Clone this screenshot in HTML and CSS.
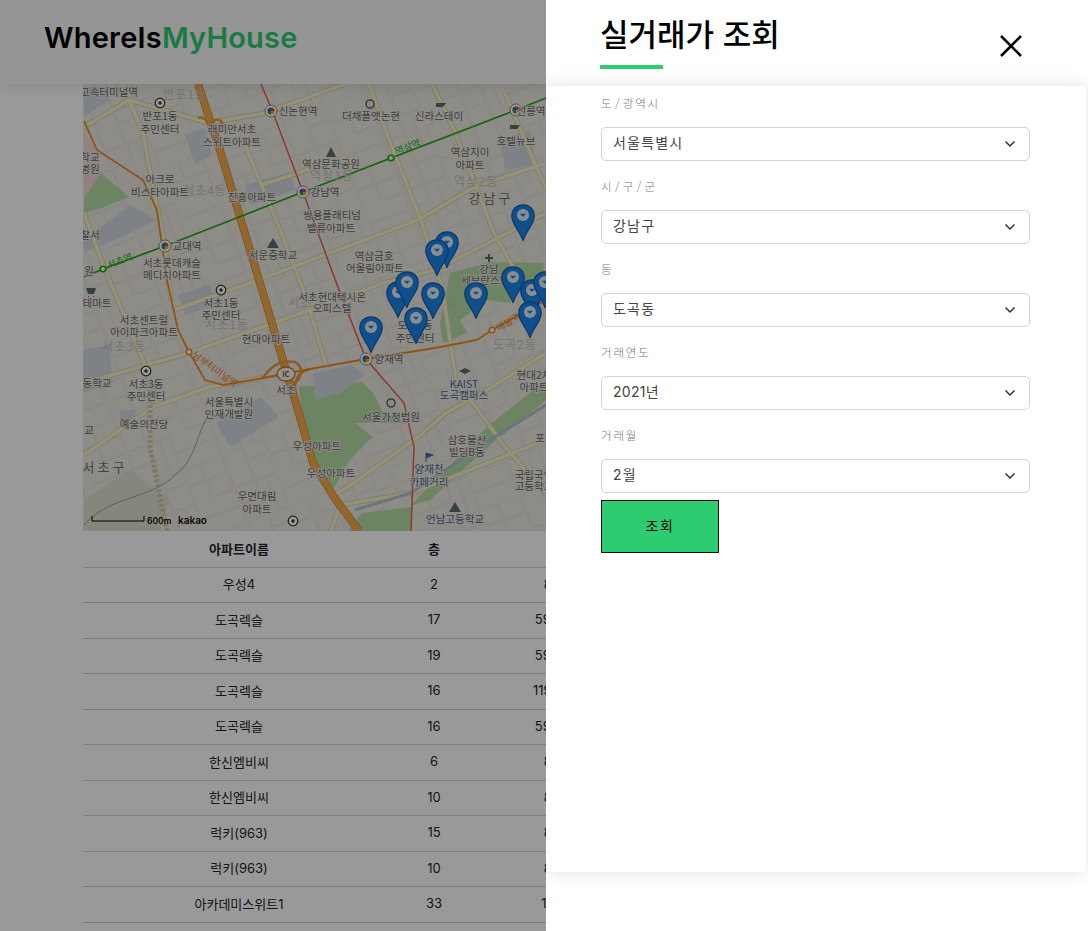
FILE: index.html
```html
<!DOCTYPE html>
<html lang="ko">
<head>
    <meta charset="UTF-8">
    <meta name="viewport" content="width=device-width, initial-scale=1.0">
    <title>WhereIsMyHouse</title>
    <link rel="stylesheet" href="styles.css">
</head>
<body>
    <header class="site-header">
        <div class="logo">WhereIs<span class="logo-green">MyHouse</span></div>
    </header>

    <main class="content">
        <div class="map">
            <svg class="map-svg" width="922" height="447" viewBox="83 84 922 447">
                <defs>
                    <pattern id="blocksA" width="88" height="72" patternUnits="userSpaceOnUse" patternTransform="rotate(-21)">
                        <path d="M0 0H88M0 0V72M20 0V36M44 0V72M66 0V72M0 18H44M44 36H88M0 54H66M22 36H44M78 36V72M66 14H88" class="street-casing"/>
                        <path d="M0 0H88M0 0V72M20 0V36M44 0V72M66 0V72M0 18H44M44 36H88M0 54H66M22 36H44M78 36V72M66 14H88" class="street"/>
                    </pattern>
                    <g id="majorRoads">
                        <path d="M84 127L129 100L209 123M129 100L143 133L153 187L164 240L171 300"/>
                        <path d="M209 123L265 113L345 84"/>
                        <path d="M84 213L104 267L143 360L157 403"/>
                        <path d="M244 143L279 227L306 297L326 365"/>
                        <path d="M84 455L153 407L209 387L261 378"/>
                        <path d="M84 383L188 353L310 310L383 283L435 270L494 240L546 213"/>
                        <path d="M174 310L258 280L418 220L474 187L546 163"/>
                        <path d="M369 84L393 150L421 220L442 287L456 380L505 447L546 493"/>
                        <path d="M432 84L453 127L494 233L522 283"/>
                        <path d="M505 93L536 167L546 187"/>
                        <path d="M261 185L292 175L345 157"/>
                        <path d="M331 497L348 487L418 437L446 413L487 390L546 353"/>
                        <path d="M331 531L340 505L411 493L546 440"/>
                    </g>
                    <symbol id="marker" viewBox="0 0 24 37">
                        <path d="M12 .8C5.5.8.8 5.6.8 12C.8 20 8 26 12 36.5C16 26 23.2 20 23.2 12C23.2 5.6 18.5.8 12 .8Z" class="marker-body"/>
                        <circle cx="12" cy="11" r="6" class="marker-dot"/>
                        <path d="M8.8 9.8H15.2L12 13Z" class="marker-arrow"/>
                    </symbol>
                    <symbol id="station" viewBox="0 0 14 14">
                        <circle cx="7" cy="7" r="6" class="station-ring"/>
                        <path d="M7 3.4A3.6 3.6 0 0 1 10.6 7H7Z" fill="#d6402f"/>
                        <path d="M10.6 7A3.6 3.6 0 0 1 7 10.6V7Z" fill="#e8b020"/>
                        <path d="M7 10.6A3.6 3.6 0 0 1 3.4 7H7Z" fill="#2f9a3c"/>
                        <path d="M3.4 7A3.6 3.6 0 0 1 7 3.4V7Z" fill="#2f5fd0"/>
                    </symbol>
                    <symbol id="dotmark" viewBox="0 0 12 12">
                        <circle cx="6" cy="6" r="4.8" class="dot-ring"/>
                        <circle cx="6" cy="6" r="1.7" class="dot-core"/>
                    </symbol>
                </defs>

                <rect x="83" y="84" width="922" height="447" class="land"/>
                <rect x="83" y="84" width="922" height="447" fill="url(#blocksA)"/>

                <path d="M84 133L97 150L101 173L84 200Z" class="pink"/>
                <path d="M84 213V198L101 173L129 197L104 207Z" class="park"/>
                <path d="M299 387L362 382L373 393L383 413L404 423L355 423L373 437L362 447L348 463L331 493L313 457L303 423Z" class="park"/>
                <path d="M450 273L490 262L543 263L546 290L517 283L510 303L487 300L460 320L467 333L443 343L440 323Z" class="park"/>
                <path d="M348 531L362 513L411 507V531Z" class="park"/>
                <path d="M411 505L446 470L487 427L546 380V400L490 445L430 500Z" class="park"/>
                <path d="M84 532L84 500L130 470L170 500L160 531Z" class="hill"/>
                <path d="M84 87H104L110 100L84 117Z" class="block"/>
                <path d="M84 240L130 205L157 220L115 240L84 252Z" class="block"/>
                <path d="M216 423L261 397L279 417L230 447Z" class="block"/>
                <path d="M313 373L352 365L365 375L340 393L315 400Z" class="block"/>
                <path d="M178 295L210 284L216 305L185 315Z" class="block"/>
                <path d="M185 135L205 128L212 155L195 165Z" class="block"/>
                <path d="M245 185L290 172L295 190L250 205Z" class="block"/>
                <path d="M83 350L110 345L112 385L83 392Z" class="block"/>
                <path d="M120 410H135V430H120Z" class="block"/>
                <path d="M500 140L530 130L536 165L505 170Z" class="block"/>

                <use href="#majorRoads" class="road-casing"/>
                <use href="#majorRoads" class="road-fill"/>
                <path d="M355 510L411 493L490 440L546 405" class="stream"/>
                <path d="M150 380V447L167 531" class="rail"/>
                <path d="M207 417C195 440 195 460 175 475C150 500 110 495 84 525" class="contour"/>

                <path d="M198 84L219 147L240 217L259 280L279 347L296 403L313 463L334 497L359 531" class="express-casing"/>
                <path d="M198 84L219 147L240 217L259 280L279 347L296 403L313 463L334 497L359 531" class="express"/>
                <path d="M198 118C205 116 208 122 209 128C211 122 217 116 222 122C224 128 216 134 214 138" class="ramp"/>
                <path d="M263 378C272 365 280 360 295 362C305 368 302 378 292 386M310 369C296 372 293 384 296 395" class="ramp"/>

                <path d="M261 84L272 110L303 192L339 290L366 359L404 403L414 447L411 531" class="line-red"/>
                <path d="M84 277L103 269L165 246L303 192L391 158L516 110L546 98" class="line-green"/>
                <path d="M84 121L97 150L143 180L157 210L167 280L178 330L189 352L205 380L223 385L263 378L310 369L366 359L435 348L477 340L492 330L546 300" class="line-orange"/>

                <circle cx="103" cy="269" r="2.8" class="stop-green"/>
                <circle cx="391" cy="158" r="2.8" class="stop-green"/>
                <circle cx="189" cy="352" r="2.8" class="stop-orange"/>
                <circle cx="492" cy="330" r="2.8" class="stop-orange"/>
                <use href="#station" x="264" y="104" width="14" height="14"/>
                <use href="#station" x="509" y="103" width="14" height="14"/>
                <use href="#station" x="296" y="185" width="14" height="14"/>
                <use href="#station" x="158" y="239" width="14" height="14"/>
                <use href="#station" x="359" y="352" width="14" height="14"/>
                <use href="#dotmark" x="154" y="97" width="12" height="12"/>
                <use href="#dotmark" x="215" y="284" width="12" height="12"/>
                <use href="#dotmark" x="140" y="365" width="12" height="12"/>
                <use href="#dotmark" x="287" y="515" width="12" height="12"/>

                <ellipse cx="286" cy="374" rx="9" ry="7" class="ic-badge"/>
                <text x="286" y="377" class="ic-text">IC</text>

                <path d="M331 147L326 157H336Z" class="poi"/>
                <path d="M273 238L267 248H279Z" class="poi"/>
                <path d="M488 254H490V257H493V259H490V262H488V259H485V257H488Z" class="poi"/>
                <path d="M455 502L449 512H461Z" class="poi"/>
                <path d="M459 371L465 368L471 371L465 374Z" class="poi"/>
                <circle cx="391" cy="403" r="4" class="poi-ring"/>
                <circle cx="370" cy="104" r="4" class="poi-ring"/>
                <path d="M436 103H446L443 107H436ZM510 125H520L517 129H510Z" class="poi"/>
                <path d="M86 288H96L94 294H88ZM88 296H89V297H88ZM93 296H94V297H93Z" class="poi"/>
                <path d="M426 453V462M426 453L433 455L426 458" class="flag"/>

                <g class="area-labels">
                    <text x="185" y="99">반포1동</text>
                    <text x="332" y="180">역삼1동</text>
                    <text x="476" y="186">역삼2동</text>
                    <text x="205" y="195">서초4동</text>
                    <text x="227" y="329">서초1동</text>
                    <text x="124" y="351">서초3동</text>
                    <text x="515" y="349">도곡2동</text>
                    <text x="300" y="307">서초</text>
                    <text x="453" y="307">동</text>
                </g>
                <g class="district-labels">
                    <text x="491" y="203">강남구</text>
                    <text x="105" y="472">서초구</text>
                </g>
                <g class="labels">
                    <text x="109" y="96">고속터미널역</text>
                    <text x="160" y="120">반포1동</text>
                    <text x="160" y="133">주민센터</text>
                    <text x="232" y="133">래미안서초</text>
                    <text x="232" y="146">스위트아파트</text>
                    <text x="298" y="115">신논현역</text>
                    <text x="371" y="120">더채플앳논현</text>
                    <text x="439" y="120">신라스테이</text>
                    <text x="531" y="115">선릉역</text>
                    <text x="516" y="145">호텔뉴브</text>
                    <text x="470" y="156">역삼지이</text>
                    <text x="470" y="169">아파트</text>
                    <text x="331" y="168">역삼문화공원</text>
                    <text x="160" y="183">아크로</text>
                    <text x="160" y="196">비스타아파트</text>
                    <text x="252" y="201">진흥아파트</text>
                    <text x="325" y="196">강남역</text>
                    <text x="332" y="219">쌍용플래티넘</text>
                    <text x="331" y="232">밸류아파트</text>
                    <text x="90" y="161">학교</text>
                    <text x="90" y="173">병원</text>
                    <text x="90" y="239">찰서</text>
                    <text x="187" y="250">교대역</text>
                    <text x="273" y="259">서운중학교</text>
                    <text x="374" y="260">역삼금호</text>
                    <text x="375" y="272">어울림아파트</text>
                    <text x="172" y="267">서초롯데캐슬</text>
                    <text x="172" y="279">메디치아파트</text>
                    <text x="89" y="275">원</text>
                    <text x="489" y="273">강남</text>
                    <text x="490" y="284">세브란스병원</text>
                    <text x="97" y="307">테마트</text>
                    <text x="221" y="307">서초1동</text>
                    <text x="221" y="319">주민센터</text>
                    <text x="332" y="301">서초현대텍시온</text>
                    <text x="332" y="312">오피스텔</text>
                    <text x="144" y="324">서초센트럴</text>
                    <text x="144" y="336">아이파크아파트</text>
                    <text x="266" y="343">현대아파트</text>
                    <text x="415" y="329">도곡1동</text>
                    <text x="415" y="342">주민센터</text>
                    <text x="389" y="363">양재역</text>
                    <text x="286" y="394">서초</text>
                    <text x="97" y="387">동학교</text>
                    <text x="146" y="388">서초3동</text>
                    <text x="146" y="400">주민센터</text>
                    <text x="229" y="406">서울특별시</text>
                    <text x="229" y="418">인재개발원</text>
                    <text x="534" y="379">현대2차</text>
                    <text x="534" y="391">아파트</text>
                    <text x="391" y="421">서울가정법원</text>
                    <text x="144" y="428">예술의전당</text>
                    <text x="89" y="434">교</text>
                    <text x="317" y="450">우성아파트</text>
                    <text x="331" y="477">우성아파트</text>
                    <text x="467" y="444">삼호물산</text>
                    <text x="467" y="456">빌딩B동</text>
                    <text x="540" y="442">포</text>
                    <text x="534" y="479">국립국악</text>
                    <text x="534" y="490">고등학교</text>
                    <text x="257" y="500">우면대림</text>
                    <text x="257" y="513">아파트</text>
                </g>
                <g class="labels labels-blue">
                    <text x="464" y="388">KAIST</text>
                    <text x="464" y="399">도곡캠퍼스</text>
                    <text x="429" y="473">양재천</text>
                    <text x="429" y="486">카페거리</text>
                    <text x="455" y="523">언남고등학교</text>
                </g>
                <text transform="translate(409 150) rotate(-21)" class="label-green">역삼역</text>
                <text transform="translate(121 264) rotate(-21)" class="label-green">서초역</text>
                <text transform="translate(213 372) rotate(36)" class="label-orange">남부터미널역</text>
                <text transform="translate(510 325) rotate(-30)" class="label-orange">매봉역</text>

                <path d="M92 516V521H144V516" class="scale"/>
                <text x="147" y="524" class="scale-text">600m</text>
                <text x="178" y="524" class="kakao">kakao</text>

                <use href="#marker" x="511" y="204" width="24" height="37"/>
                <use href="#marker" x="435" y="231" width="24" height="37"/>
                <use href="#marker" x="425" y="239" width="24" height="37"/>
                <use href="#marker" x="386" y="281" width="24" height="37"/>
                <use href="#marker" x="395" y="271" width="24" height="37"/>
                <use href="#marker" x="421" y="282" width="24" height="37"/>
                <use href="#marker" x="404" y="307" width="24" height="37"/>
                <use href="#marker" x="359" y="316" width="24" height="37"/>
                <use href="#marker" x="464" y="282" width="24" height="37"/>
                <use href="#marker" x="501" y="266" width="24" height="37"/>
                <use href="#marker" x="520" y="279" width="24" height="37"/>
                <use href="#marker" x="533" y="271" width="24" height="37"/>
                <use href="#marker" x="518" y="301" width="24" height="37"/>
            </svg>
        </div>

        <table class="deal-table">
            <colgroup>
                <col class="col-name">
                <col class="col-floor">
                <col class="col-area">
                <col>
            </colgroup>
            <thead>
                <tr><th>아파트이름</th><th>층</th><th>㎡</th><th>거래금액</th></tr>
            </thead>
            <tbody>
                <tr><td>우성4</td><td>2</td><td>84</td><td>87,000</td></tr>
                <tr><td>도곡렉슬</td><td>17</td><td>59.97</td><td>205,000</td></tr>
                <tr><td>도곡렉슬</td><td>19</td><td>59.97</td><td>210,000</td></tr>
                <tr><td>도곡렉슬</td><td>16</td><td>119.93</td><td>345,000</td></tr>
                <tr><td>도곡렉슬</td><td>16</td><td>59.97</td><td>205,000</td></tr>
                <tr><td>한신엠비씨</td><td>6</td><td>84</td><td>138,000</td></tr>
                <tr><td>한신엠비씨</td><td>10</td><td>84</td><td>140,000</td></tr>
                <tr><td>럭키(963)</td><td>15</td><td>84</td><td>190,000</td></tr>
                <tr><td>럭키(963)</td><td>10</td><td>84</td><td>188,000</td></tr>
                <tr><td>아카데미스위트1</td><td>33</td><td>120</td><td>160,000</td></tr>
            </tbody>
        </table>
    </main>

    <div class="overlay"></div>

    <aside class="drawer">
        <div class="drawer-head">
            <div>
                <h2 class="drawer-title">실거래가 조회</h2>
                <div class="title-bar"></div>
            </div>
            <svg class="close-icon" width="24" height="24" viewBox="0 0 24 24">
                <path d="M2 2L22 22M22 2L2 22"/>
            </svg>
        </div>
        <div class="drawer-card">
            <label class="field-label" for="sido">도 / 광역시</label>
            <select class="field-select" id="sido"><option>서울특별시</option></select>

            <label class="field-label" for="gugun">시 / 구 / 군</label>
            <select class="field-select" id="gugun"><option>강남구</option></select>

            <label class="field-label" for="dong">동</label>
            <select class="field-select" id="dong"><option>도곡동</option></select>

            <label class="field-label" for="year">거래연도</label>
            <select class="field-select field-year" id="year"><option>2021년</option></select>

            <label class="field-label" for="month">거래월</label>
            <select class="field-select" id="month"><option>2월</option></select>

            <button class="search-btn">조회</button>
        </div>
    </aside>
</body>
</html>
```

FILE: styles.css
```css
* {
    box-sizing: border-box;
}
html, body {
    height: 100%;
    margin: 0;
    overflow: hidden;
}
body {
    background: #fff;
    color: #212529;
    font-family: Inter, "Noto Sans CJK KR", sans-serif;
    font-size: 14px;
}

/* header */
.site-header {
    position: relative;
    z-index: 1;
    height: 84px;
    padding: 17px 44px 0;
    background: #f9f9f9;
    box-shadow: 0 2px 14px rgba(0, 0, 0, 0.1);
}
.logo {
    color: #000;
    font-size: 29px;
    font-weight: 600;
    line-height: 42px;
    letter-spacing: 0.2px;
}
.logo-green {
    color: #2ecc71;
}

/* map */
.content {
    width: 922px;
    margin-left: 83px;
}
.map {
    height: 447.5px;
    overflow: hidden;
}
.map-svg {
    display: block;
}
.map-svg text {
    font-family: "Noto Sans CJK KR", sans-serif;
    text-anchor: middle;
}
.land { fill: #ece9e2; }
.street-casing { fill: none; stroke: #cfccc4; stroke-width: 2.2; }
.street { fill: none; stroke: #f7f6f1; stroke-width: 1.1; }
.pink { fill: #f3d8d4; }
.park { fill: #b4dca4; }
.hill { fill: #dfdfd0; }
.block { fill: #d3d9e2; }
.road-casing { fill: none; stroke: #cfccae; stroke-width: 5; stroke-linejoin: round; }
.road-fill { fill: none; stroke: #f6f3c8; stroke-width: 3.6; stroke-linejoin: round; }
.stream { fill: none; stroke: #b4c4d4; stroke-width: 3; }
.rail { fill: none; stroke: #cfc9a4; stroke-width: 5; stroke-dasharray: 3 2; }
.contour { fill: none; stroke: #8fb07e; stroke-width: 1; }
.express-casing { fill: none; stroke: #c68a3c; stroke-width: 8; stroke-linejoin: round; }
.express { fill: none; stroke: #f6ab4e; stroke-width: 6.5; stroke-linejoin: round; }
.ramp { fill: none; stroke: #e6983e; stroke-width: 2.5; }
.line-red { fill: none; stroke: #e8604c; stroke-width: 1.5; }
.line-green { fill: none; stroke: #20a810; stroke-width: 1.7; }
.line-orange { fill: none; stroke: #f08a24; stroke-width: 1.8; }
.stop-green { fill: #fff; stroke: #20a810; stroke-width: 1.6; }
.stop-orange { fill: #fff; stroke: #f08a24; stroke-width: 1.6; }
.station-ring { fill: #fff; stroke: #8a8a8a; stroke-width: 1; }
.dot-ring { fill: #fff; stroke: #333; stroke-width: 1.2; }
.dot-core { fill: #333; }
.ic-badge { fill: #f5f3e0; stroke: #b87a2c; stroke-width: 1.4; }
.map-svg .ic-text { fill: #555; font-size: 7px; font-weight: 700; }
.poi { fill: #5d6d70; }
.poi-ring { fill: none; stroke: #666; stroke-width: 1.6; }
.flag { fill: #4a63a8; stroke: #4a63a8; stroke-width: 1; }
.labels text {
    fill: #666;
    font-size: 10.5px;
    stroke: #efece4;
    stroke-width: 1.6px;
    paint-order: stroke;
}
.labels-blue text { fill: #4c6490; }
.area-labels text {
    fill: #c4c4bf;
    font-size: 12px;
    letter-spacing: 1px;
}
.district-labels text {
    fill: #6e6e6e;
    font-size: 13px;
    letter-spacing: 3px;
}
.map-svg .label-green { fill: #20a810; font-size: 9.5px; }
.map-svg .label-orange { fill: #e87a1c; font-size: 9.5px; }
.scale { fill: none; stroke: #000; stroke-width: 1; }
.map-svg .scale-text { fill: #111; font-family: Inter, sans-serif; font-size: 8.5px; font-weight: 600; text-anchor: start; }
.map-svg .kakao { fill: #111; font-family: Inter, sans-serif; font-size: 10px; font-weight: 600; text-anchor: start; }
.marker-body { fill: #1a86ea; stroke: #0f5cae; stroke-width: 1.2; }
.marker-dot { fill: #e6ecef; }
.marker-arrow { fill: #1a86ea; }

/* table */
.deal-table {
    width: 922px;
    border-collapse: collapse;
    table-layout: fixed;
    font-family: Inter, "Noto Sans CJK KR", sans-serif;
}
.col-name { width: 312px; }
.col-floor { width: 78px; }
.col-area { width: 158px; }
.deal-table th,
.deal-table td {
    height: 35.5px;
    padding: 0 0 2px;
    border-bottom: 1px solid #d4d4d4;
    font-size: 13px;
    font-weight: 400;
    text-align: center;
    vertical-align: middle;
}
.deal-table th {
    font-weight: 600;
}

/* drawer */
.overlay {
    position: fixed;
    z-index: 2;
    top: 0;
    right: 0;
    bottom: 0;
    left: 0;
    background: rgba(0, 0, 0, 0.4);
}
.drawer {
    position: fixed;
    z-index: 3;
    top: 0;
    right: 0;
    bottom: 0;
    display: flex;
    flex-direction: column;
    width: 542px;
    overflow: hidden;
    background: #fff;
}
.drawer-head {
    display: flex;
    justify-content: space-between;
    height: 86px;
    padding: 12px 65px 0 54px;
}
.drawer-title {
    margin: 0;
    color: #000;
    font-family: "Noto Sans CJK KR", sans-serif;
    font-size: 31px;
    font-weight: 500;
    line-height: 46px;
    transform: translateY(-2px);
}
.title-bar {
    width: 63px;
    height: 4px;
    margin-top: 7px;
    background: #2ecc71;
}
.close-icon {
    margin-top: 22px;
}
.close-icon path {
    fill: none;
    stroke: #000;
    stroke-width: 2.6;
}
.drawer-card {
    width: 540px;
    height: 786px;
    padding: 5px 56px 0 55px;
    border-radius: 4px;
    background: #fff;
    box-shadow: 0 0 20px rgba(0, 0, 0, 0.12);
}
.field-label {
    display: block;
    height: 24px;
    margin-bottom: 12px;
    color: #777;
    font-family: "Noto Sans CJK KR", sans-serif;
    font-size: 11.5px;
    font-weight: 300;
    line-height: 24px;
    letter-spacing: 1.8px;
    word-spacing: -3.5px;
}
.field-select {
    display: block;
    width: 429px;
    height: 34px;
    margin-bottom: 13px;
    padding: 0 11px 4px;
    border: 1px solid #cfd3dc;
    border-radius: 5px;
    appearance: none;
    background: #fff url("data:image/svg+xml,%3Csvg xmlns='http://www.w3.org/2000/svg' width='12' height='8' viewBox='0 0 12 8'%3E%3Cpath d='M1.5 1.5L6 6L10.5 1.5' fill='none' stroke='%23333' stroke-width='1.5'/%3E%3C/svg%3E") no-repeat right 13px center;
    color: #444;
    font-family: Inter, "Noto Sans CJK KR", sans-serif;
    font-size: 14px;
    letter-spacing: 1.2px;
}
.field-year {
    letter-spacing: 0.3px;
}
.search-btn {
    display: block;
    width: 118px;
    height: 53px;
    margin-top: -6px;
    padding-bottom: 5px;
    border: 1px solid #111;
    background: #2ecc71;
    color: #000;
    font-family: "Noto Sans CJK KR", sans-serif;
    font-size: 14px;
    letter-spacing: 1.5px;
}
```
